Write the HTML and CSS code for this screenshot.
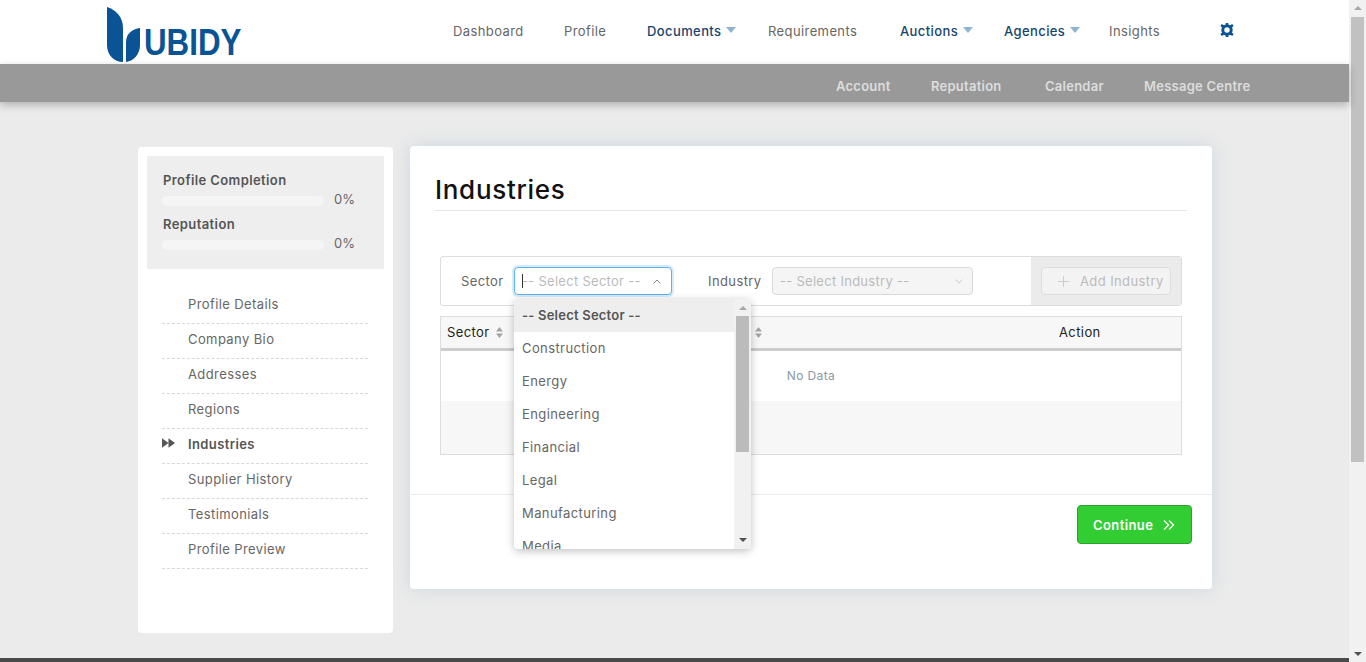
FILE: index.html
```html
<!DOCTYPE html>
<html lang="en">
<head>
<meta charset="utf-8">
<title>Industries</title>
<link rel="stylesheet" href="styles.css">
</head>
<body>
<div class="window">
  <div class="page">
    <header class="topbar">
      <div class="logo">
        <svg class="logo-mark" width="35" height="56" viewBox="0 0 35 56">
          <path d="M0 0C9 3 16 10 16 21V55C7 55 0 48 0 38Z" fill="#0a5394"/>
          <path d="M33 21C25 22 19 27 19 35V55C27 54 33 47 33 38Z" fill="#0a5394"/>
        </svg>
        <span class="logo-text">UBIDY</span>
      </div>
      <nav class="mainnav">
        <a>Dashboard</a>
        <a>Profile</a>
        <a class="blue caret">Documents</a>
        <a>Requirements</a>
        <a class="blue caret">Auctions</a>
        <a class="blue caret">Agencies</a>
        <a>Insights</a>
        <svg class="gear" width="14" height="14" viewBox="0 0 14 14">
          <circle cx="7" cy="7" r="4.2" fill="none" stroke="#0a5394" stroke-width="3"/>
          <path d="M5.7 0h2.6v3H5.7zM5.7 11h2.6v3H5.7zM.4 3.2l1.3-2.2 2.6 1.5-1.3 2.2zM9.7 11.5l1.3-2.2 2.6 1.5-1.3 2.2zM.4 10.8l2.6-1.5 1.3 2.2L1.7 13zM9.7 2.5L12.3 1l1.3 2.2L11 4.7z" fill="#0a5394"/>
        </svg>
      </nav>
    </header>
    <nav class="subnav">
      <a>Account</a>
      <a>Reputation</a>
      <a>Calendar</a>
      <a>Message Centre</a>
    </nav>
    <main class="content">
      <aside class="sidebar">
        <section class="stats">
          <h4>Profile Completion</h4>
          <div class="meter"><span class="track"></span><span class="pct">0%</span></div>
          <h4>Reputation</h4>
          <div class="meter"><span class="track"></span><span class="pct">0%</span></div>
        </section>
        <ul class="sidemenu">
          <li>Profile Details</li>
          <li>Company Bio</li>
          <li>Addresses</li>
          <li>Regions</li>
          <li class="active">
            <svg class="ff" width="13" height="10" viewBox="0 0 14 10"><path d="M0 0l7 5-7 5zM7 0l7 5-7 5z" fill="#555"/></svg>
            Industries
          </li>
          <li>Supplier History</li>
          <li>Testimonials</li>
          <li>Profile Preview</li>
        </ul>
      </aside>
      <section class="card">
        <div class="card-body">
          <h1>Industries</h1>
          <div class="filter">
            <div class="filter-fields">
              <label class="flabel sector-label">Sector</label>
              <div class="select-wrap">
                <div class="select open">
                  <span class="cursor"></span><span class="ph">-- Select Sector --</span>
                  <svg class="chev" width="8" height="5" viewBox="0 0 8 5"><path d="M.5 4.500L4 1l3.500 3.500" fill="none" stroke="#888"/></svg>
                </div>
                <div class="dropdown">
                  <ul class="options">
                    <li class="sel">-- Select Sector --</li>
                    <li>Construction</li>
                    <li>Energy</li>
                    <li>Engineering</li>
                    <li>Financial</li>
                    <li>Legal</li>
                    <li>Manufacturing</li>
                    <li>Media</li>
                  </ul>
                  <div class="dd-scroll">
                    <span class="arrow up"></span>
                    <span class="dd-thumb"></span>
                    <span class="arrow down"></span>
                  </div>
                </div>
              </div>
              <label class="flabel industry-label">Industry</label>
              <div class="select disabled">
                <span class="ph">-- Select Industry --</span>
                <svg class="chev" width="8" height="5" viewBox="0 0 8 5"><path d="M.5 .5L4 4l3.500-3.500" fill="none" stroke="#ccc"/></svg>
              </div>
            </div>
            <div class="filter-action">
              <button class="add-btn">
                <svg class="plus" width="11" height="11" viewBox="0 0 11 11"><path d="M5.500 0v11M0 5.500h11" stroke="#ccc" fill="none"/></svg>
                Add Industry
              </button>
            </div>
          </div>
          <div class="table">
            <div class="thead">
              <span class="th-sector">Sector
                <svg class="sort" width="7" height="11" viewBox="0 0 7 11"><path d="M3.500 0L7 4.500H0zM3.500 11L0 6.500H7z" fill="#a3a3a3"/></svg>
              </span>
              <span class="th-industry">
                <svg class="sort" width="7" height="11" viewBox="0 0 7 11"><path d="M3.500 0L7 4.500H0zM3.500 11L0 6.500H7z" fill="#a3a3a3"/></svg>
              </span>
              <span class="th-action">Action</span>
            </div>
            <div class="nodata">No Data</div>
            <div class="empty-row"></div>
          </div>
        </div>
        <div class="card-foot">
          <button class="continue">Continue
            <svg width="12" height="10" viewBox="0 0 12 10"><path d="M1 .5L5.500 5 1 9.500M6 .5L10.500 5 6 9.500" fill="none" stroke="#fff" stroke-width="1.300"/></svg>
          </button>
        </div>
      </section>
    </main>
    <footer class="footer"></footer>
  </div>
  <div class="scrollbar">
    <span class="arrow up"></span>
    <span class="thumb"></span>
    <span class="arrow down"></span>
  </div>
</div>
</body>
</html>
```

FILE: styles.css
```css
* { box-sizing: border-box; }
html, body { margin: 0; height: 100%; overflow: hidden; }
body {
  font-family: Inter, "Open Sans", "Liberation Sans", sans-serif;
  font-size: 13px;
  letter-spacing: .4px;
  color: #666;
}
.window { display: flex; width: 1366px; height: 662px; }
.page { width: 1349px; height: 662px; display: flex; flex-direction: column; background: #ebebeb; }

.topbar { height: 64px; background: #fff; display: flex; padding-left: 107px; flex: none; }
.logo { width: 346px; display: flex; align-items: flex-start; padding-top: 7px; }
.logo-mark { flex: none; }
.logo-text {
  font-family: "Liberation Sans", sans-serif;
  font-weight: 700;
  font-size: 36px;
  line-height: 26px;
  letter-spacing: 0;
  color: #0a5394;
  margin: 23px 0 0 2px;
  transform: scaleX(.87);
  transform-origin: left center;
}
.mainnav {
  display: grid;
  grid-template-columns: 111px 83px 121px 132px 104px 105px 111px 14px;
  align-items: center;
  height: 62px;
}
.mainnav a { color: #666; white-space: nowrap; }
.mainnav a.blue { color: #17456e; font-weight: 500; }
.caret::after {
  content: "";
  display: inline-block;
  border: 5px solid transparent;
  border-top: 6px solid #8fb3d3;
  border-bottom: 0;
  margin-left: 5px;
  vertical-align: 3px;
}
.gear { margin-top: -3px; }

.subnav {
  flex: none;
  height: 38px;
  background: #999;
  box-shadow: 0 3px 8px rgba(0,0,0,.25);
  display: grid;
  grid-template-columns: 95px 114px 99px auto;
  align-items: center;
  padding: 6px 0 0 836px;
  position: relative;
}
.subnav a { color: #ddd; font-weight: 600; letter-spacing: .25px; }

.content {
  flex: 1;
  display: flex;
  align-items: flex-start;
  padding: 44px 0 0 138px;
  gap: 17px;
  min-height: 0;
}
.sidebar {
  width: 255px;
  height: 486px;
  margin-top: 1px;
  background: #fff;
  border-radius: 4px;
  padding: 9px;
}
.stats {
  height: 113px;
  background: #eee;
  padding: 16px 15px 0;
}
.stats h4 { margin: 0; padding-left: 1px; font-size: 13px; line-height: 17px; font-weight: 600; color: #555; }
.meter { display: flex; align-items: center; height: 10px; margin: 7px 0 10px; gap: 10px; }
.track { width: 162px; height: 10px; border-radius: 5px; background: #f5f5f5; }
.pct { font-size: 13px; color: #666; margin-top: -4px; letter-spacing: .1px; }
.sidemenu { list-style: none; margin: 20px 0 0; padding: 0 16px 0 15px; }
.sidemenu li {
  height: 35px;
  line-height: 30px;
  padding-left: 26px;
  border-bottom: 1px dashed #d8d8d8;
  position: relative;
  color: #666;
}
.sidemenu li.active { font-weight: 600; color: #555; }
.ff { position: absolute; left: 0; top: 9px; }

.card {
  width: 802px;
  height: 443px;
  background: #fff;
  border-radius: 4px;
  box-shadow: 0 0 18px rgba(170,190,210,.45);
  display: flex;
  flex-direction: column;
}
.card-body { height: 349px; padding: 26px 25px 0; border-bottom: 1px solid #ececec; flex: none; }
h1 {
  margin: 0 0 45px;
  height: 39px;
  font-size: 26px;
  line-height: 36px;
  font-weight: 500;
  color: #111;
  letter-spacing: .7px;
  border-bottom: 1px solid #e6e6e6;
}
.filter {
  width: 742px;
  height: 50px;
  margin-left: 5px;
  border: 1px solid #ddd;
  border-radius: 3px;
  display: flex;
}
.filter-fields { flex: 1; display: flex; align-items: center; padding-left: 20px; }
.flabel { color: #666; }
.sector-label { width: 53px; }
.industry-label { width: 64px; margin-left: 36px; }
.select-wrap { position: relative; width: 158px; }
.select {
  width: 158px;
  height: 28px;
  border: 1px solid #d9d9d9;
  border-radius: 4px;
  display: flex;
  align-items: center;
  padding: 0 10px 0 7px;
  background: #fff;
}
.select.open { border-color: #5fb0ef; box-shadow: 0 0 0 2px rgba(95,176,239,.25); }
.select.disabled { width: 201px; background: #f5f5f5; padding-right: 9px; }
.ph { color: #bbb; white-space: nowrap; flex: 1; letter-spacing: .28px; }
.cursor { width: 1px; height: 14px; background: #333; margin-right: -1px; flex: none; }
.chev { flex: none; }

.dropdown {
  position: absolute;
  left: 0;
  top: 32px;
  width: 237px;
  height: 250px;
  background: #fff;
  border-radius: 4px;
  box-shadow: 0 2px 8px rgba(0,0,0,.25);
  overflow: hidden;
  display: flex;
  z-index: 5;
}
.options { list-style: none; margin: 0; padding: 0; flex: 1; }
.options li { height: 33px; line-height: 33px; padding-left: 8px; color: #666; white-space: nowrap; }
.options li.sel { background: #eee; font-weight: 600; color: #555; letter-spacing: .22px; }
.dd-scroll {
  width: 17px;
  flex: none;
  background: #f1f1f1;
  display: flex;
  flex-direction: column;
  align-items: center;
}
.dd-thumb { width: 13px; height: 136px; background: #bbb; margin: 6px 0 auto; }
.dd-scroll .arrow.up { margin-top: 7px; }
.dd-scroll .arrow.down { margin-bottom: 7px; }

.arrow { width: 0; height: 0; border: 4px solid transparent; flex: none; }
.arrow.up { border-top: 0; border-bottom: 4px solid #a8a8a8; }
.arrow.down { border-bottom: 0; border-top: 4px solid #505050; }

.filter-action {
  width: 150px;
  background: #ebebeb;
  display: flex;
  align-items: center;
  padding-left: 10px;
}
.add-btn {
  width: 130px;
  height: 28px;
  border: 1px solid #ddd;
  border-radius: 4px;
  background: #f3f3f3;
  color: #bbb;
  font: inherit;
  letter-spacing: inherit;
  padding: 0 0 0 16px;
  display: flex;
  align-items: center;
  white-space: nowrap;
}
.plus { margin-right: 11px; flex: none; }

.table {
  width: 742px;
  height: 139px;
  margin: 10px 0 0 5px;
  border: 1px solid #ddd;
  display: flex;
  flex-direction: column;
}
.thead {
  height: 34px;
  background: #f7f7f7;
  border-bottom: 3px solid #ccc;
  display: grid;
  grid-template-columns: 306px 306px 1fr;
  align-items: center;
  color: #222;
  padding: 0 0 2px 6px;
  flex: none;
}
.sort { margin-left: 2px; vertical-align: -1px; }
.nodata { height: 50px; line-height: 50px; text-align: center; font-size: 12px; color: #8a9aa5; flex: none; }
.empty-row { flex: 1; background: #f7f7f7; }

.card-foot { display: flex; justify-content: flex-end; padding: 10px 20px 0 0; }
.continue {
  width: 115px;
  height: 39px;
  background: #32cd32;
  border: 1px solid #27a327;
  border-radius: 4px;
  color: #fff;
  font: inherit;
  font-weight: 600;
  letter-spacing: inherit;
  display: flex;
  align-items: center;
  gap: 10px;
  padding-left: 15px;
}

.footer { height: 4px; background: #4a4a4a; flex: none; }

.scrollbar {
  width: 17px;
  height: 662px;
  background: #f1f1f1;
  display: flex;
  flex-direction: column;
  align-items: center;
}
.scrollbar .arrow.up { margin-top: 6px; }
.scrollbar .thumb { width: 13px; height: 445px; margin: 7px 0 auto; background: #c1c1c1; }
.scrollbar .arrow.down { margin-bottom: 6px; }
```
